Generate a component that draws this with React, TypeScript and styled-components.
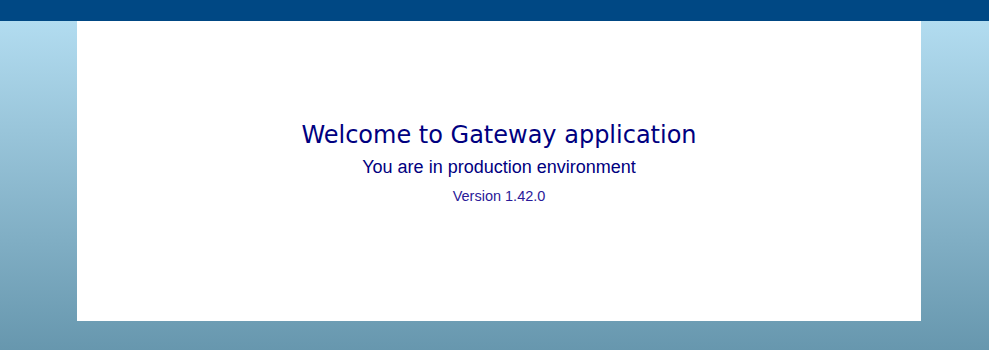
import React from "react";
import styled, { createGlobalStyle } from "styled-components";

const Global = createGlobalStyle`
  html, body { margin: 0; padding: 0; }
  body { background: #6797ae; overflow: hidden; }
`;

const Page = styled.div`
  width: 989px;
  height: 350px;
  display: flex;
  flex-direction: column;
`;

const Header = styled.header`
  height: 21px;
  background: #004884;
  flex: none;
`;

const Main = styled.main`
  flex: 1;
  background: linear-gradient(to bottom, #b2dcf0 0%, #6797ae 100%);
  padding: 0 68px 29px 77px;
  display: flex;
`;

const Panel = styled.section`
  width: 844px;
  height: 300px;
  background: #ffffff;
  display: flex;
  flex-direction: column;
  align-items: center;
  padding-top: 99px;
  box-sizing: border-box;
`;

const Title = styled.h1`
  margin: 0;
  font-family: "DejaVu Sans", Verdana, sans-serif;
  font-weight: normal;
  font-size: 24px;
  line-height: 30px;
  color: #000080;
`;

const Subtitle = styled.h2`
  margin: 5px 0 0;
  font-family: "Liberation Sans", Arial, sans-serif;
  font-weight: normal;
  font-size: 18px;
  line-height: 24px;
  color: #000080;
`;

const Version = styled.p`
  margin: 8px 0 0;
  font-family: "Liberation Sans", Arial, sans-serif;
  font-size: 14.5px;
  line-height: 18px;
  color: #2a1a99;
`;

export default function App() {
  return (
    <>
      <Global />
      <Page>
        <Header />
        <Main>
          <Panel>
            <Title>Welcome to Gateway application</Title>
            <Subtitle>You are in production environment</Subtitle>
            <Version>Version 1.42.0</Version>
          </Panel>
        </Main>
      </Page>
    </>
  );
}
